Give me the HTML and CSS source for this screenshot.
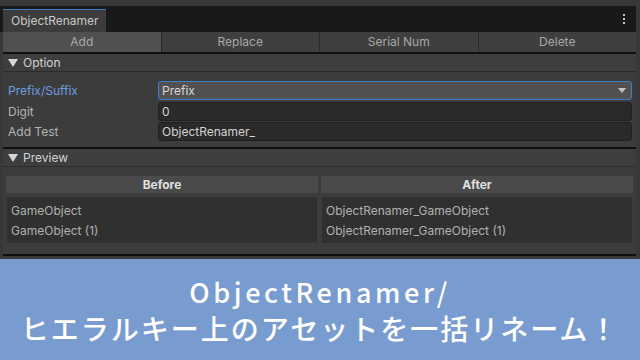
FILE: index.html
```html
<!DOCTYPE html>
<html lang="ja">
<head>
<meta charset="utf-8">
<link rel="stylesheet" href="styles.css">
</head>
<body>
<div class="editor">
  <div class="topgap"></div>
  <div class="tabbar">
    <div class="tab">ObjectRenamer</div>
    <div class="kebab"><i></i><i></i><i></i></div>
  </div>
  <div class="toolbar">
    <div class="tbtn active">Add</div>
    <div class="tbtn">Replace</div>
    <div class="tbtn">Serial Num</div>
    <div class="tbtn last">Delete</div>
  </div>
  <div class="section">
    <div class="shead"><span class="tri"></span>Option</div>
    <div class="rows">
      <div class="row">
        <div class="label focus">Prefix/Suffix</div>
        <div class="field dropdown">Prefix<span class="ddarrow"></span></div>
      </div>
      <div class="row">
        <div class="label">Digit</div>
        <div class="field">0</div>
      </div>
      <div class="row">
        <div class="label">Add Test</div>
        <div class="field">ObjectRenamer_</div>
      </div>
    </div>
  </div>
  <div class="section">
    <div class="shead"><span class="tri"></span>Preview</div>
    <div class="preview">
      <div class="col">
        <div class="chead">Before</div>
        <div class="list">
          <div class="item">GameObject</div>
          <div class="item">GameObject (1)</div>
        </div>
      </div>
      <div class="col">
        <div class="chead">After</div>
        <div class="list">
          <div class="item">ObjectRenamer_GameObject</div>
          <div class="item">ObjectRenamer_GameObject (1)</div>
        </div>
      </div>
    </div>
  </div>
</div>
<div class="banner">
  <div class="line1">ObjectRenamer/</div>
  <div class="line2">ヒエラルキー上のアセットを一括リネーム！</div>
</div>
</body>
</html>
```
FILE: styles.css
```css
html, body {
  margin: 0;
  padding: 0;
}
body {
  width: 640px;
  height: 360px;
  overflow: hidden;
  background: #383838;
  font-family: Inter, "Noto Sans", sans-serif;
  font-size: 12px;
  color: #c4c4c4;
}
.editor {
  height: 259px;
  background: #383838;
  display: flex;
  flex-direction: column;
}
.topgap {
  height: 6px;
}
.tabbar {
  height: 26px;
  margin-right: 4px;
  background: #191919;
  display: flex;
  align-items: flex-end;
  justify-content: space-between;
}
.tab {
  margin-left: 3px;
  width: 103px;
  height: 23px;
  box-sizing: border-box;
  border-top: 1px solid #3a79bb;
  background: #3c3c3c;
  padding-left: 8px;
  line-height: 22px;
  color: #c8c8c8;
}
.kebab {
  align-self: center;
  margin-right: 11px;
  display: flex;
  flex-direction: column;
  gap: 2px;
}
.kebab i {
  display: block;
  width: 2px;
  height: 2px;
  background: #c4c4c4;
}
.toolbar {
  margin: 0 4px 0 3px;
  height: 20px;
  display: flex;
  border-bottom: 2px solid #101010;
}
.tbtn {
  flex: 1;
  background: #3f3f3f;
  border-right: 1px solid #2b2b2b;
  text-align: center;
  line-height: 20px;
  color: #a8a8a8;
}
.tbtn.active {
  background: #505050;
}
.tbtn.last {
  border-right: none;
}
.section {
  margin: 0 4px 0 3px;
  background: #3c3c3c;
  border-bottom: 2px solid #0f0f0f;
}
.shead {
  height: 17px;
  border-bottom: 1px solid #2c2c2c;
  display: flex;
  align-items: center;
  padding-left: 5px;
  color: #d2d2d2;
  background: #3e3e3e;
}
.tri {
  width: 0;
  height: 0;
  border-left: 5px solid transparent;
  border-right: 5px solid transparent;
  border-top: 8px solid #d8d8d8;
  margin-right: 5px;
}
.rows {
  padding: 9px 4px 6px 5px;
  display: flex;
  flex-direction: column;
  gap: 1.5px;
}
.row {
  display: flex;
  align-items: center;
  height: 19px;
}
.label {
  width: 150px;
  color: #b4b4b4;
}
.label.focus {
  color: #6f9ee0;
}
.field {
  flex: 1;
  height: 19px;
  box-sizing: border-box;
  background: #2a2a2a;
  border: 1px solid #212121;
  border-radius: 3px;
  padding-left: 3px;
  line-height: 17px;
  color: #d2d2d2;
}
.field.dropdown {
  background: #515151;
  border-color: #3d7fca;
  position: relative;
  color: #d8d8d8;
}
.ddarrow {
  position: absolute;
  right: 5px;
  top: 6px;
  width: 0;
  height: 0;
  border-left: 4px solid transparent;
  border-right: 4px solid transparent;
  border-top: 5px solid #c4c4c4;
}
.preview {
  display: flex;
  gap: 3px;
  padding: 9px 0 11px 3px;
}
.col {
  width: 312px;
  display: flex;
  flex-direction: column;
  gap: 4px;
}
.chead {
  height: 17px;
  line-height: 17px;
  background: #4a4a4a;
  text-align: center;
  font-weight: 700;
  color: #e0e0e0;
}
.list {
  margin: 0 1px;
  background: #303030;
  padding: 4px 0 4px 4px;
  height: 38px;
}
.item {
  height: 20px;
  line-height: 20px;
  color: #b0b0b0;
}
.banner {
  height: 101px;
  background: #789bd0;
  color: #ffffff;
  font-family: "Noto Sans CJK JP", "Noto Sans", sans-serif;
  display: flex;
  flex-direction: column;
  align-items: center;
  justify-content: center;
  gap: 2px;
}
.line1 {
  font-size: 27px;
  letter-spacing: 3.6px;
  line-height: 34px;
  font-weight: 500;
}
.line2 {
  font-size: 28px;
  letter-spacing: 2px;
  line-height: 34px;
  font-weight: 500;
}
```
